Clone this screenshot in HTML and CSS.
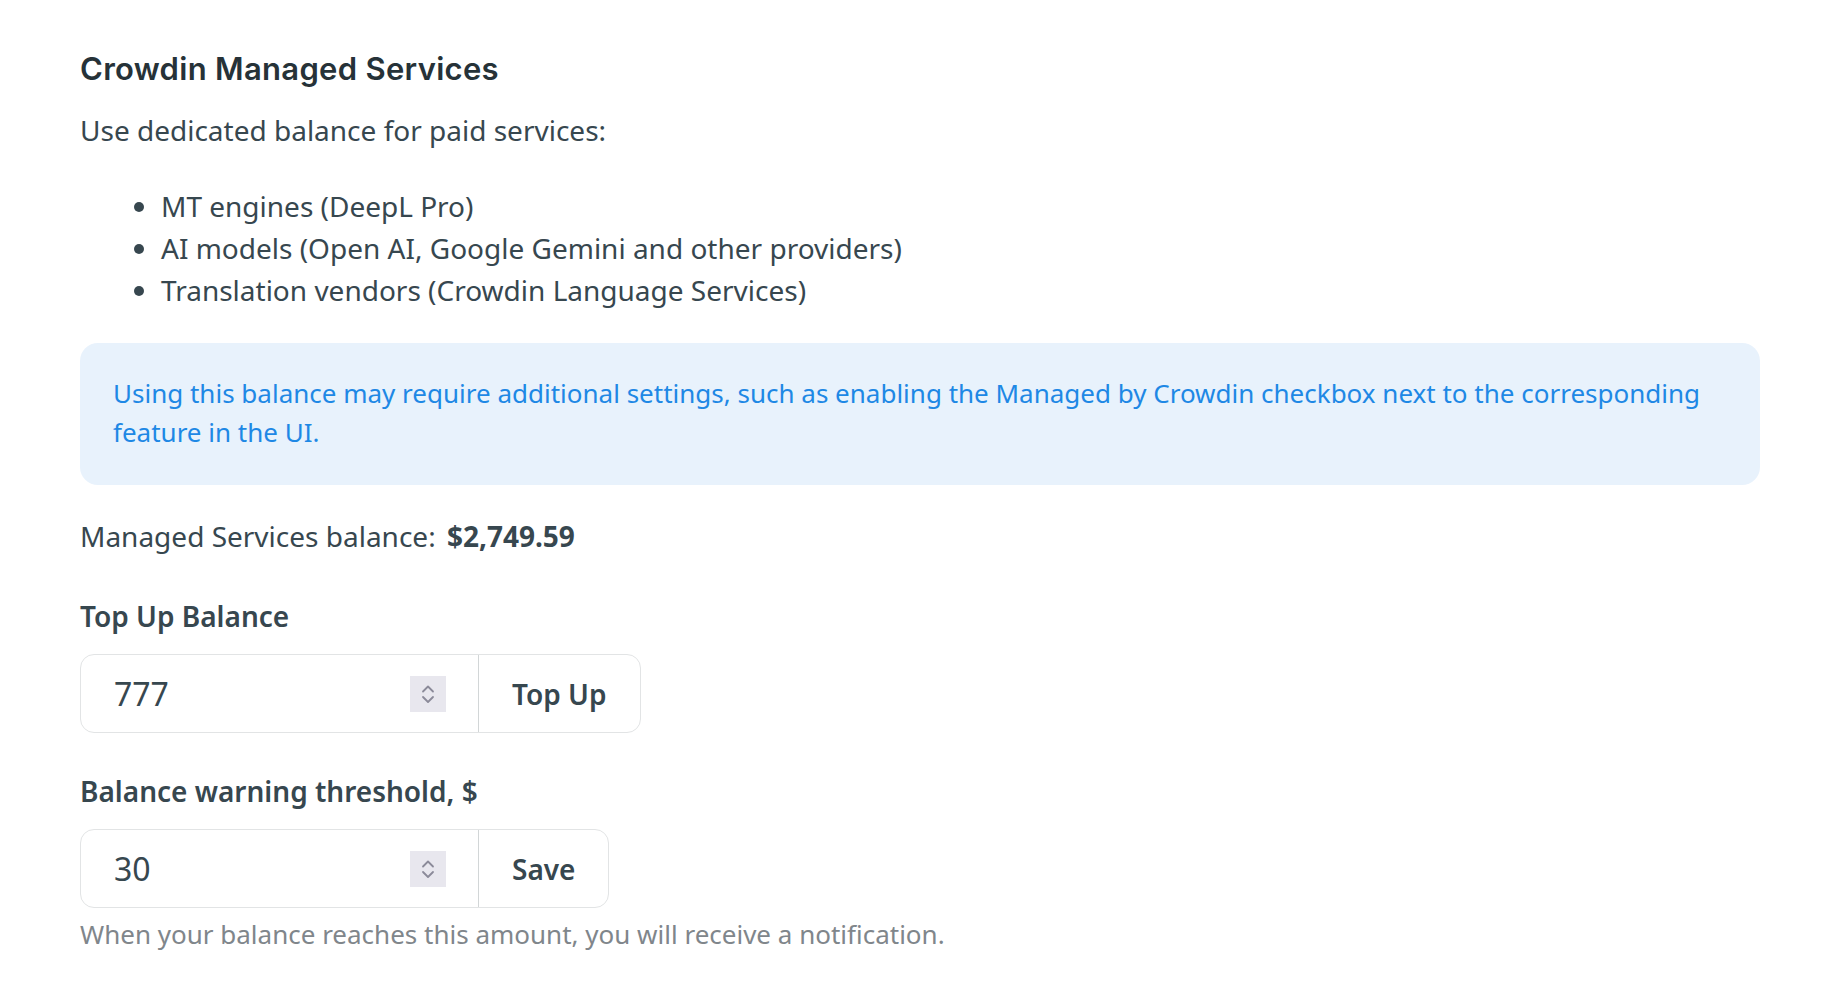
FILE: index.html
```html
<!DOCTYPE html>
<html lang="en">
<head>
<meta charset="utf-8">
<title>Crowdin Managed Services</title>
<link rel="stylesheet" href="styles.css">
</head>
<body>
<main class="page">
  <h2 class="title">Crowdin Managed Services</h2>
  <p class="lead">Use dedicated balance for paid services:</p>
  <ul class="services">
    <li>MT engines (DeepL Pro)</li>
    <li>AI models (Open AI, Google Gemini and other providers)</li>
    <li>Translation vendors (Crowdin Language Services)</li>
  </ul>
  <div class="notice">Using this balance may require additional settings, such as enabling the Managed by Crowdin checkbox next to the corresponding feature in the UI.</div>
  <p class="balance">Managed Services balance: <strong class="amount">$2,749.59</strong></p>

  <section class="field">
    <label class="field-label">Top Up Balance</label>
    <div class="group">
      <div class="num">
        <span class="num-value">777</span>
        <span class="spin"><svg width="36" height="36" viewBox="0 0 36 36"><path d="M13 15.5 L18 10.5 L23 15.5" fill="none" stroke="#8b8a99" stroke-width="1.8" stroke-linecap="round" stroke-linejoin="round"/><path d="M13 21 L18 26 L23 21" fill="none" stroke="#8b8a99" stroke-width="1.8" stroke-linecap="round" stroke-linejoin="round"/></svg></span>
      </div>
      <button class="btn">Top Up</button>
    </div>
  </section>

  <section class="field field-next">
    <label class="field-label">Balance warning threshold, $</label>
    <div class="group">
      <div class="num">
        <span class="num-value">30</span>
        <span class="spin"><svg width="36" height="36" viewBox="0 0 36 36"><path d="M13 15.5 L18 10.5 L23 15.5" fill="none" stroke="#8b8a99" stroke-width="1.8" stroke-linecap="round" stroke-linejoin="round"/><path d="M13 21 L18 26 L23 21" fill="none" stroke="#8b8a99" stroke-width="1.8" stroke-linecap="round" stroke-linejoin="round"/></svg></span>
      </div>
      <button class="btn">Save</button>
    </div>
    <p class="hint">When your balance reaches this amount, you will receive a notification.</p>
  </section>
</main>
</body>
</html>
```

FILE: styles.css
```css
html, body {
  margin: 0;
  padding: 0;
  background: #ffffff;
}

body {
  font-family: "Noto Sans", "Open Sans", sans-serif;
  font-size: 28px;
  line-height: 42px;
  color: #37474f;
}

.page {
  padding: 51px 79px 40px 80px;
}

.title {
  margin: 0;
  font-family: Inter, "Noto Sans", sans-serif;
  font-size: 31px;
  line-height: 36px;
  font-weight: 600;
  letter-spacing: 0.3px;
  color: #263238;
}

.lead {
  margin: 22px 0 0;
}

.services {
  margin: 34px 0 0;
  padding: 0 0 0 81px;
}

.notice {
  margin-top: 32px;
  padding: 31px 32px 33px 33px;
  background: #e8f2fc;
  border-radius: 18px;
  color: #1e88e5;
  font-size: 26px;
  line-height: 39px;
}

.balance {
  margin: 30px 0 0;
}

.amount {
  font-weight: 700;
  margin-left: 4px;
}

.field {
  margin-top: 38px;
}

.field-next {
  margin-top: 37px;
}

.field-label {
  display: block;
  font-weight: 600;
  margin-bottom: 17px;
}

.group {
  display: inline-flex;
  align-items: stretch;
  height: 79px;
  box-sizing: border-box;
  border: 1.5px solid #e2e4e5;
  border-radius: 14px;
  background: #fff;
}

.num {
  width: 398px;
  box-sizing: border-box;
  display: flex;
  align-items: center;
  padding: 0 32px 0 33px;
  border-right: 1.5px solid #d2d6d7;
}

.num-value {
  flex: 1;
  font-size: 32px;
  color: #37474f;
}

.spin {
  display: flex;
  width: 36px;
  height: 36px;
  background: #e8e7ee;
}

.btn {
  border: 0;
  background: transparent;
  font-family: "Noto Sans", "Open Sans", sans-serif;
  font-size: 28px;
  font-weight: 600;
  color: #37474f;
  padding: 0 33px;
  cursor: pointer;
}

.hint {
  margin: 7px 0 0;
  font-size: 26px;
  line-height: 39px;
  color: #80868b;
}
```
